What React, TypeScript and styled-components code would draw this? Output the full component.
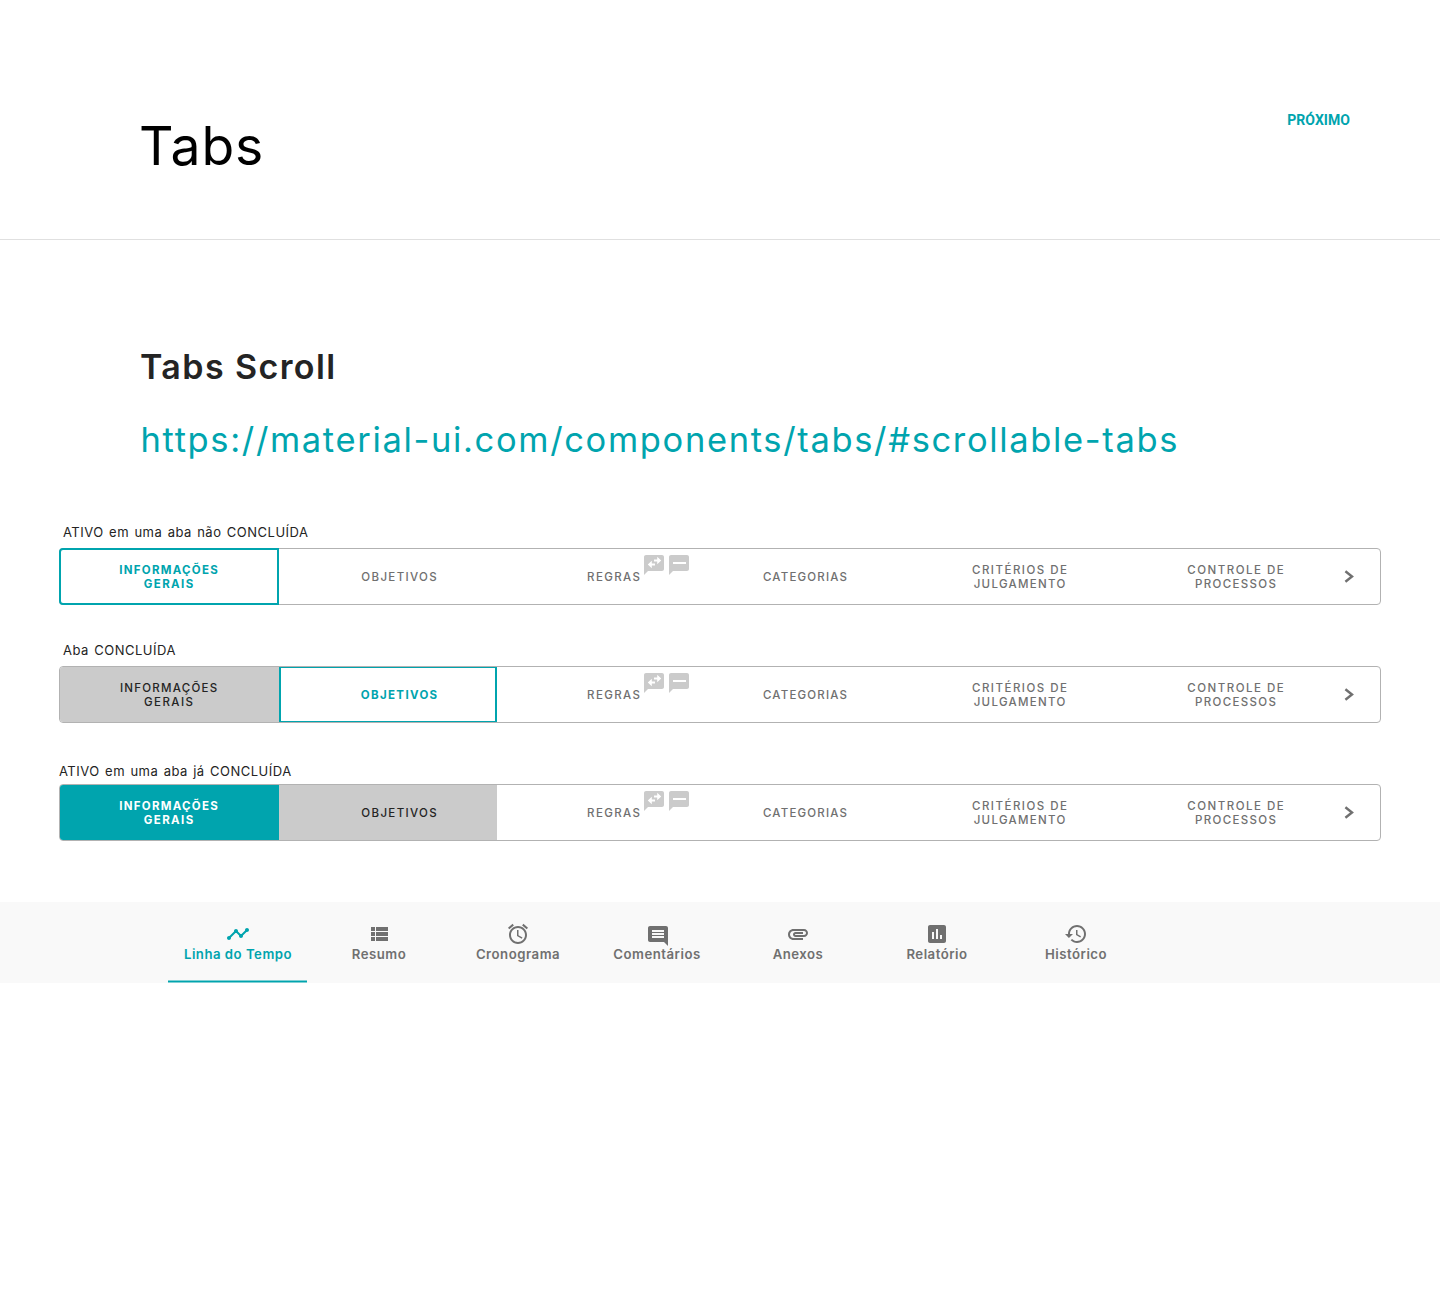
import React from "react";
import styled, { createGlobalStyle, css } from "styled-components";

const teal = "#00a4ae";
const ink = "#242424";
const muted = "#707070";
const done = "#cbcbcb";
const line = "#b2b2b2";

const GlobalStyle = createGlobalStyle`
  * { box-sizing: border-box; }
  body {
    margin: 0;
    background: #fff;
    font-family: Inter, "Liberation Sans", sans-serif;
  }
`;

const Page = styled.div`
  min-height: 1311px;
  background: #fff;
`;

const Header = styled.header`
  display: flex;
  justify-content: space-between;
  align-items: flex-start;
  height: 240px;
  padding: 110px 90px 0 139px;
  border-bottom: 1px solid #e0e0e0;
`;

const Title = styled.h1`
  margin: 6px 0 0;
  font-size: 53.5px;
  font-weight: 400;
  line-height: 60px;
  letter-spacing: 0.9px;
  color: #000;
`;

const NextLink = styled.a`
  font-family: Roboto, sans-serif;
  font-size: 14px;
  font-weight: 700;
  line-height: 20px;
  letter-spacing: 0.05px;
  color: ${teal};
`;

const Intro = styled.section`
  display: flex;
  flex-direction: column;
  gap: 25px;
  padding: 103px 0 0 140px;
  white-space: nowrap;
`;

const Heading = styled.h2`
  margin: 0;
  font-size: 34px;
  font-weight: 600;
  line-height: 48px;
  letter-spacing: 1.4px;
  color: ${ink};
`;

const DocLink = styled.a`
  padding-left: 0.5px;
  font-size: 34.5px;
  line-height: 48px;
  letter-spacing: 1.65px;
  color: ${teal};
`;

const Example = styled.section<{ $top: number }>`
  padding: ${(p) => p.$top}px 59px 0;
`;

const Caption = styled.p<{ $indent: number; $gap: number }>`
  margin: 0 0 ${(p) => p.$gap}px;
  padding-left: ${(p) => p.$indent}px;
  font-size: 13px;
  line-height: 20px;
  letter-spacing: 0.5px;
  word-spacing: 1.2px;
  color: ${ink};
`;

const Strip = styled.div`
  display: flex;
  height: 57px;
  border: 1px solid ${line};
  border-radius: 4px;
`;

type State = "idle" | "active" | "done" | "activeDone";

const stateStyles = {
  idle: css`
    color: ${muted};
  `,
  active: css`
    color: ${teal};
    font-weight: 700;
    &::before {
      content: "";
      position: absolute;
      inset: 0;
      border: solid ${teal};
      border-width: 1px 2px;
    }
    &:first-child::before {
      inset: -1px 0 -1px -1px;
      border-width: 2px;
      border-radius: 4px 0 0 4px;
    }
  `,
  done: css`
    color: ${ink};
    background: ${done};
  `,
  activeDone: css`
    color: #fff;
    font-weight: 700;
    background: ${teal};
  `,
};

const Tab = styled.div<{ $width: number; $shift: number; $state: State }>`
  position: relative;
  display: flex;
  align-items: center;
  justify-content: center;
  flex: none;
  width: ${(p) => p.$width}px;
  padding-left: ${(p) => Math.max(p.$shift, 0)}px;
  padding-right: ${(p) => Math.max(-p.$shift, 0)}px;
  font-size: 11.5px;
  font-weight: 500;
  line-height: 14px;
  text-align: center;
  white-space: nowrap;
  &:first-child {
    border-radius: 3px 0 0 3px;
  }
  ${(p) => stateStyles[p.$state]}
`;

const Label = styled.div`
  display: flex;
  flex-direction: column;
`;

const LabelLine = styled.span<{ $track: number }>`
  letter-spacing: ${(p) => p.$track}px;
  text-indent: ${(p) => p.$track}px;
`;

const Badges = styled.div`
  position: absolute;
  left: 145px;
  top: 4px;
  display: flex;
  gap: 1px;
  color: ${done};
`;

const ScrollButton = styled.div`
  display: flex;
  align-items: center;
  justify-content: center;
  flex: none;
  width: 44px;
  color: ${muted};
`;

const Icon = styled.svg`
  display: block;
  width: 24px;
  height: 24px;
  overflow: visible;
  fill: currentColor;
`;

const Nav = styled.nav`
  display: grid;
  grid-template-columns: 140px 142px 136px 142px 140px 138px 140px;
  height: 81px;
  margin-top: 61px;
  padding-left: 168px;
  background: #f9f9f9;
`;

const NavItem = styled.div<{ $active: boolean }>`
  position: relative;
  display: flex;
  flex-direction: column;
  align-items: center;
  padding-top: 20px;
  font-size: 13.2px;
  font-weight: 600;
  line-height: 16px;
  letter-spacing: 0.5px;
  color: ${(p) => (p.$active ? teal : muted)};
  ${(p) =>
    p.$active &&
    css`
      &::after {
        content: "";
        position: absolute;
        left: 0;
        right: 0.6px;
        bottom: 0;
        height: 3px;
        background: linear-gradient(#7fd0d4 1px, ${teal} 1px 2px, #7fd0d4 2px);
      }
    `}
`;

interface TabDef {
  lines: [string, number][];
  width: number;
  shift: number;
  badges?: boolean;
}

const tabs: TabDef[] = [
  { lines: [["INFORMAÇÕES", 1.25], ["GERAIS", 1.42]], width: 219, shift: -2 },
  { lines: [["OBJETIVOS", 1.34]], width: 218, shift: 22 },
  { lines: [["REGRAS", 1.38]], width: 218, shift: 15, badges: true },
  { lines: [["CATEGORIAS", 1.2]], width: 180, shift: 0 },
  { lines: [["CRITÉRIOS DE", 1.5], ["JULGAMENTO", 1.3]], width: 250, shift: -1 },
  { lines: [["CONTROLE DE", 1.48], ["PROCESSOS", 1.33]], width: 182, shift: -1 },
];

const BUBBLE = "M20 2H4c-1.1 0-1.99.9-1.99 2L2 22l4-4h14c1.1 0 2-.9 2-2V4c0-1.1-.9-2-2-2z";

function TabStrip({ states }: { states: State[] }) {
  return (
    <Strip>
      {tabs.map((tab, i) => (
        <Tab key={i} $width={tab.width} $shift={tab.shift} $state={states[i] ?? "idle"}>
          <Label>
            {tab.lines.map(([text, track]) => (
              <LabelLine key={text} $track={track}>
                {text}
              </LabelLine>
            ))}
          </Label>
          {tab.badges && (
            <Badges>
              <Icon viewBox="0 0 24 24">
                <path d={BUBBLE} />
                <path fill="#fff" d="M5.800 11.500l4-3.800v2.700H13v2.200H9.800v2.700zM19.200 7.500l-4-3.800v2.700H12v2.200h3.200v2.700z" />
              </Icon>
              <Icon viewBox="0 0 24 24">
                <path d={BUBBLE} />
                <path fill="#fff" d="M6 9h13v2H6z" />
              </Icon>
            </Badges>
          )}
        </Tab>
      ))}
      <ScrollButton>
        <Icon viewBox="0 0 24 24">
          <path fill="none" stroke="currentColor" strokeWidth="2.4" d="M8.400 6.300L15 11.500l-6.600 5.200" />
        </Icon>
      </ScrollButton>
    </Strip>
  );
}

const navItems: { label: string; path: string; box?: string }[] = [
  {
    label: "Linha do Tempo",
    path: "M23 8c0 1.100-.9 2-2 2-.18 0-.35-.02-.51-.07l-3.560 3.550c.05.16.07.34.07.52 0 1.100-.9 2-2 2s-2-.9-2-2c0-.18.02-.36.07-.52l-2.550-2.550c-.16.05-.34.07-.52.07s-.36-.02-.52-.07l-4.550 4.560c.05.16.07.33.07.51 0 1.100-.9 2-2 2s-2-.9-2-2 .9-2 2-2c.18 0 .35.02.51.07l4.560-4.550C8.020 9.360 8 9.180 8 9c0-1.100.9-2 2-2s2 .9 2 2c0 .18-.02.36-.07.52l2.550 2.550c.16-.05.34-.07.52-.07s.36.02.52.07l3.550-3.560C19.020 8.350 19 8.180 19 8c0-1.100.9-2 2-2s2 .9 2 2z",
  },
  { label: "Resumo", path: "M4 14h4v-4H4v4zm0 5h4v-4H4v4zM4 9h4V5H4v4zm5 5h12v-4H9v4zm0 5h12v-4H9v4zM9 5v4h12V5H9z" },
  {
    label: "Cronograma",
    path: "M22 5.720l-4.600-3.860-1.290 1.530 4.600 3.860L22 5.720zM7.880 3.390L6.600 1.860 2 5.710l1.290 1.530 4.590-3.850zM12.500 8H11v6l4.750 2.850.75-1.230-4-2.370V8zM12 4c-4.970 0-9 4.030-9 9s4.020 9 9 9c4.970 0 9-4.030 9-9s-4.030-9-9-9zm0 16c-3.870 0-7-3.130-7-7s3.130-7 7-7 7 3.130 7 7-3.130 7-7 7z",
  },
  {
    label: "Comentários",
    path: "M21.990 4c0-1.100-.89-2-1.990-2H4c-1.100 0-2 .9-2 2v12c0 1.100.9 2 2 2h14l4 4-.01-18zM18 14H6v-2h12v2zm0-3H6V9h12v2zm0-3H6V6h12v2z",
    box: "-1 -2 24 24",
  },
  {
    label: "Anexos",
    path: "M2 12.500C2 9.460 4.460 7 7.500 7H18c2.210 0 4 1.790 4 4s-1.790 4-4 4H9.500C8.120 15 7 13.880 7 12.500S8.120 10 9.500 10H17v2H9.410c-.55 0-.55 1 0 1H18c1.100 0 2-.9 2-2s-.9-2-2-2H7.500C5.570 9 4 10.570 4 12.500S5.570 16 7.500 16H17v2H7.500C4.460 18 2 15.540 2 12.500z",
  },
  {
    label: "Relatório",
    path: "M19 3H5c-1.100 0-2 .9-2 2v14c0 1.100.9 2 2 2h14c1.100 0 2-.9 2-2V5c0-1.100-.9-2-2-2zM9 17H7v-7h2v7zm4 0h-2V7h2v10zm4 0h-2v-4h2v4z",
  },
  {
    label: "Histórico",
    path: "M13 3c-4.970 0-9 4.030-9 9H1l3.890 3.890.07.14L9 12H6c0-3.870 3.130-7 7-7s7 3.130 7 7-3.130 7-7 7c-1.930 0-3.680-.79-4.940-2.060l-1.420 1.420C8.270 19.990 10.510 21 13 21c4.970 0 9-4.030 9-9s-4.030-9-9-9zm-1 5v5l4.280 2.540.72-1.210-3.500-2.080V8H12z",
  },
];

export default function App() {
  return (
    <Page>
      <GlobalStyle />
      <Header>
        <Title>Tabs</Title>
        <NextLink>PRÓXIMO</NextLink>
      </Header>
      <Intro>
        <Heading>Tabs Scroll</Heading>
        <DocLink>https://material-ui.com/components/tabs/#scrollable-tabs</DocLink>
      </Intro>
      <Example $top={58}>
        <Caption $indent={4} $gap={6}>ATIVO em uma aba não CONCLUÍDA</Caption>
        <TabStrip states={["active"]} />
      </Example>
      <Example $top={35}>
        <Caption $indent={4} $gap={6}>Aba CONCLUÍDA</Caption>
        <TabStrip states={["done", "active"]} />
      </Example>
      <Example $top={38}>
        <Caption $indent={0} $gap={3}>ATIVO em uma aba já CONCLUÍDA</Caption>
        <TabStrip states={["activeDone", "done"]} />
      </Example>
      <Nav>
        {navItems.map((item, i) => (
          <NavItem key={item.label} $active={i === 0}>
            <Icon viewBox={item.box ?? "0 0 24 24"}>
              <path d={item.path} />
            </Icon>
            {item.label}
          </NavItem>
        ))}
      </Nav>
    </Page>
  );
}
